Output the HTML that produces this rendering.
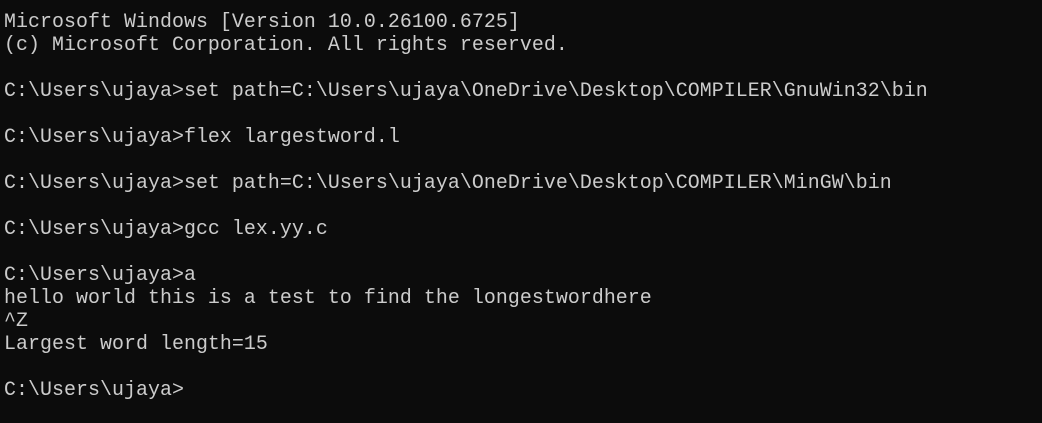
<!DOCTYPE html>
<html><head><style>
html,body{margin:0;padding:0;background:#0c0c0c;width:1042px;height:423px;overflow:hidden}
pre{margin:0;position:absolute;left:4px;top:10px;font-family:"Liberation Mono",monospace;font-size:19.9px;letter-spacing:0.06px;line-height:23px;color:#cccccc}
</style></head><body><pre>Microsoft Windows [Version 10.0.26100.6725]
(c) Microsoft Corporation. All rights reserved.

C:\Users\ujaya&gt;set path=C:\Users\ujaya\OneDrive\Desktop\COMPILER\GnuWin32\bin

C:\Users\ujaya&gt;flex largestword.l

C:\Users\ujaya&gt;set path=C:\Users\ujaya\OneDrive\Desktop\COMPILER\MinGW\bin

C:\Users\ujaya&gt;gcc lex.yy.c

C:\Users\ujaya&gt;a
hello world this is a test to find the longestwordhere
^Z
Largest word length=15

C:\Users\ujaya&gt;</pre></body></html>
